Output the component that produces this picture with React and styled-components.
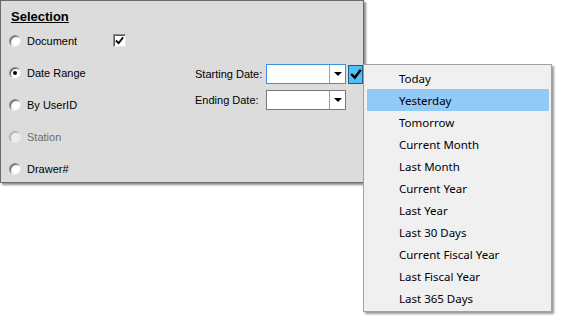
import React from "react";
import styled, { createGlobalStyle } from "styled-components";

const Global = createGlobalStyle`
  html, body { margin: 0; padding: 0; background: #ffffff; }
  body { font-family: "Liberation Sans", Arial, sans-serif; }
`;

const Stage = styled.div`
  position: relative;
  width: 563px;
  height: 321px;
  background: #ffffff;
`;

const Panel = styled.div`
  box-sizing: border-box;
  width: 364px;
  height: 183px;
  background: #dcdcdc;
  border: 1px solid #6a6a6a;
  box-shadow: 2px 2px 2px rgba(0, 0, 0, 0.45);
  display: flex;
  flex-direction: column;
`;

const Title = styled.div`
  height: 24px;
  box-sizing: border-box;
  padding: 8px 0 0 10px;
  font: bold 13px/15px "Liberation Sans", Arial, sans-serif;
  text-decoration: underline;
  color: #000;
`;

const Body = styled.div`
  display: flex;
`;

const RadioList = styled.div`
  width: 195px;
  display: flex;
  flex-direction: column;
`;

const Row = styled.div`
  height: 32px;
  display: flex;
  align-items: center;
  padding-left: 8px;
  padding-top: 1px;
  box-sizing: border-box;
`;

const Radio = styled.span`
  box-sizing: border-box;
  width: 12px;
  height: 12px;
  border-radius: 50%;
  border: 1px solid;
  border-color: ${p => (p.$disabled ? "#a8a8a8 #e8e8e8 #e8e8e8 #a8a8a8" : "#8a8a8a #e6e6e6 #e6e6e6 #8a8a8a")};
  background: ${p => (p.$disabled ? "#ececec" : "#ffffff")};
  box-shadow: inset 1px 1px 0 ${p => (p.$disabled ? "#c4c4c4" : "#5e5e5e")};
  display: flex;
  align-items: center;
  justify-content: center;
  flex: none;
  &::after {
    content: "";
    display: ${p => (p.$checked ? "block" : "none")};
    width: 4px;
    height: 4px;
    border-radius: 50%;
    background: #000;
  }
`;

const Label = styled.span`
  margin-left: 6px;
  font-size: 11px;
  color: ${p => (p.$disabled ? "#6d6d6d" : "#000")};
  width: ${p => p.$w || "auto"};
`;

const CheckBox = styled.span`
  box-sizing: border-box;
  width: 13px;
  height: 13px;
  background: #fff;
  border: 1px solid;
  border-color: #8a8a8a #e6e6e6 #e6e6e6 #8a8a8a;
  box-shadow: inset 1px 1px 0 #5e5e5e;
  display: flex;
  align-items: center;
  justify-content: center;
`;

const DateGroup = styled.div`
  margin-top: 40px;
  display: flex;
  flex-direction: column;
  gap: 6px;
`;

const DateRow = styled.div`
  display: flex;
  align-items: center;
  height: 20px;
`;

const DateLabel = styled.span`
  width: 71px;
  font-size: 11px;
  color: #000;
`;

const Combo = styled.div`
  box-sizing: border-box;
  width: 80px;
  height: 20px;
  background: #fff;
  border: 1px solid ${p => (p.$focused ? "#3d8fdf" : "#7a7a7a")};
  display: flex;
`;

const ComboText = styled.div`
  flex: 1;
`;

const ComboButton = styled.div`
  width: 15px;
  border-left: 1px solid #a0a0a0;
  display: flex;
  align-items: center;
  justify-content: center;
  background: #fff;
`;

const Arrow = styled.span`
  width: 0;
  height: 0;
  border-left: 4px solid transparent;
  border-right: 4px solid transparent;
  border-top: 4px solid #000;
`;

const PickButton = styled.div`
  box-sizing: border-box;
  margin-left: 2px;
  width: 15px;
  height: 19px;
  background: #4fc0f7;
  border: 1px solid #1f5c82;
  display: flex;
  align-items: center;
  justify-content: center;
`;

const Menu = styled.div`
  position: absolute;
  left: 363px;
  top: 64px;
  box-sizing: border-box;
  width: 189px;
  height: 248px;
  background: #f0f0f0;
  border: 1px solid #a0a0a0;
  box-shadow: 2px 2px 2px rgba(0, 0, 0, 0.4);
  padding: 2px 2px 2px 3px;
  display: flex;
  flex-direction: column;
`;

const Item = styled.div`
  height: 22px;
  display: flex;
  align-items: center;
  padding-left: 32px;
  font: 11.5px "Noto Sans", "Open Sans", sans-serif;
  color: #000;
  background: ${p => (p.$active ? "#91c9f7" : "transparent")};
`;

const items = [
  "Today",
  "Yesterday",
  "Tomorrow",
  "Current Month",
  "Last Month",
  "Current Year",
  "Last Year",
  "Last 30 Days",
  "Current Fiscal Year",
  "Last Fiscal Year",
  "Last 365 Days",
];

const Check = ({ size = 10, stroke = "#000", width = 2 }) => (
  <svg width={size} height={size} viewBox="0 0 10 10">
    <path d="M1 5 L4 8 L9 1.5" fill="none" stroke={stroke} strokeWidth={width} />
  </svg>
);

export default function App() {
  return (
    <Stage>
      <Global />
      <Panel>
        <Title>Selection</Title>
        <Body>
          <RadioList>
            <Row>
              <Radio />
              <Label $w="86px">Document</Label>
              <CheckBox>
                <Check size={9} />
              </CheckBox>
            </Row>
            <Row>
              <Radio $checked />
              <Label>Date Range</Label>
            </Row>
            <Row>
              <Radio />
              <Label>By UserID</Label>
            </Row>
            <Row>
              <Radio $disabled />
              <Label $disabled>Station</Label>
            </Row>
            <Row>
              <Radio />
              <Label>Drawer#</Label>
            </Row>
          </RadioList>
          <DateGroup>
            <DateRow>
              <DateLabel>Starting Date:</DateLabel>
              <Combo $focused>
                <ComboText />
                <ComboButton>
                  <Arrow />
                </ComboButton>
              </Combo>
              <PickButton>
                <Check size={12} stroke="#000" width={2} />
              </PickButton>
            </DateRow>
            <DateRow>
              <DateLabel>Ending Date:</DateLabel>
              <Combo>
                <ComboText />
                <ComboButton>
                  <Arrow />
                </ComboButton>
              </Combo>
            </DateRow>
          </DateGroup>
        </Body>
      </Panel>
      <Menu>
        {items.map(t => (
          <Item key={t} $active={t === "Yesterday"}>
            {t}
          </Item>
        ))}
      </Menu>
    </Stage>
  );
}
